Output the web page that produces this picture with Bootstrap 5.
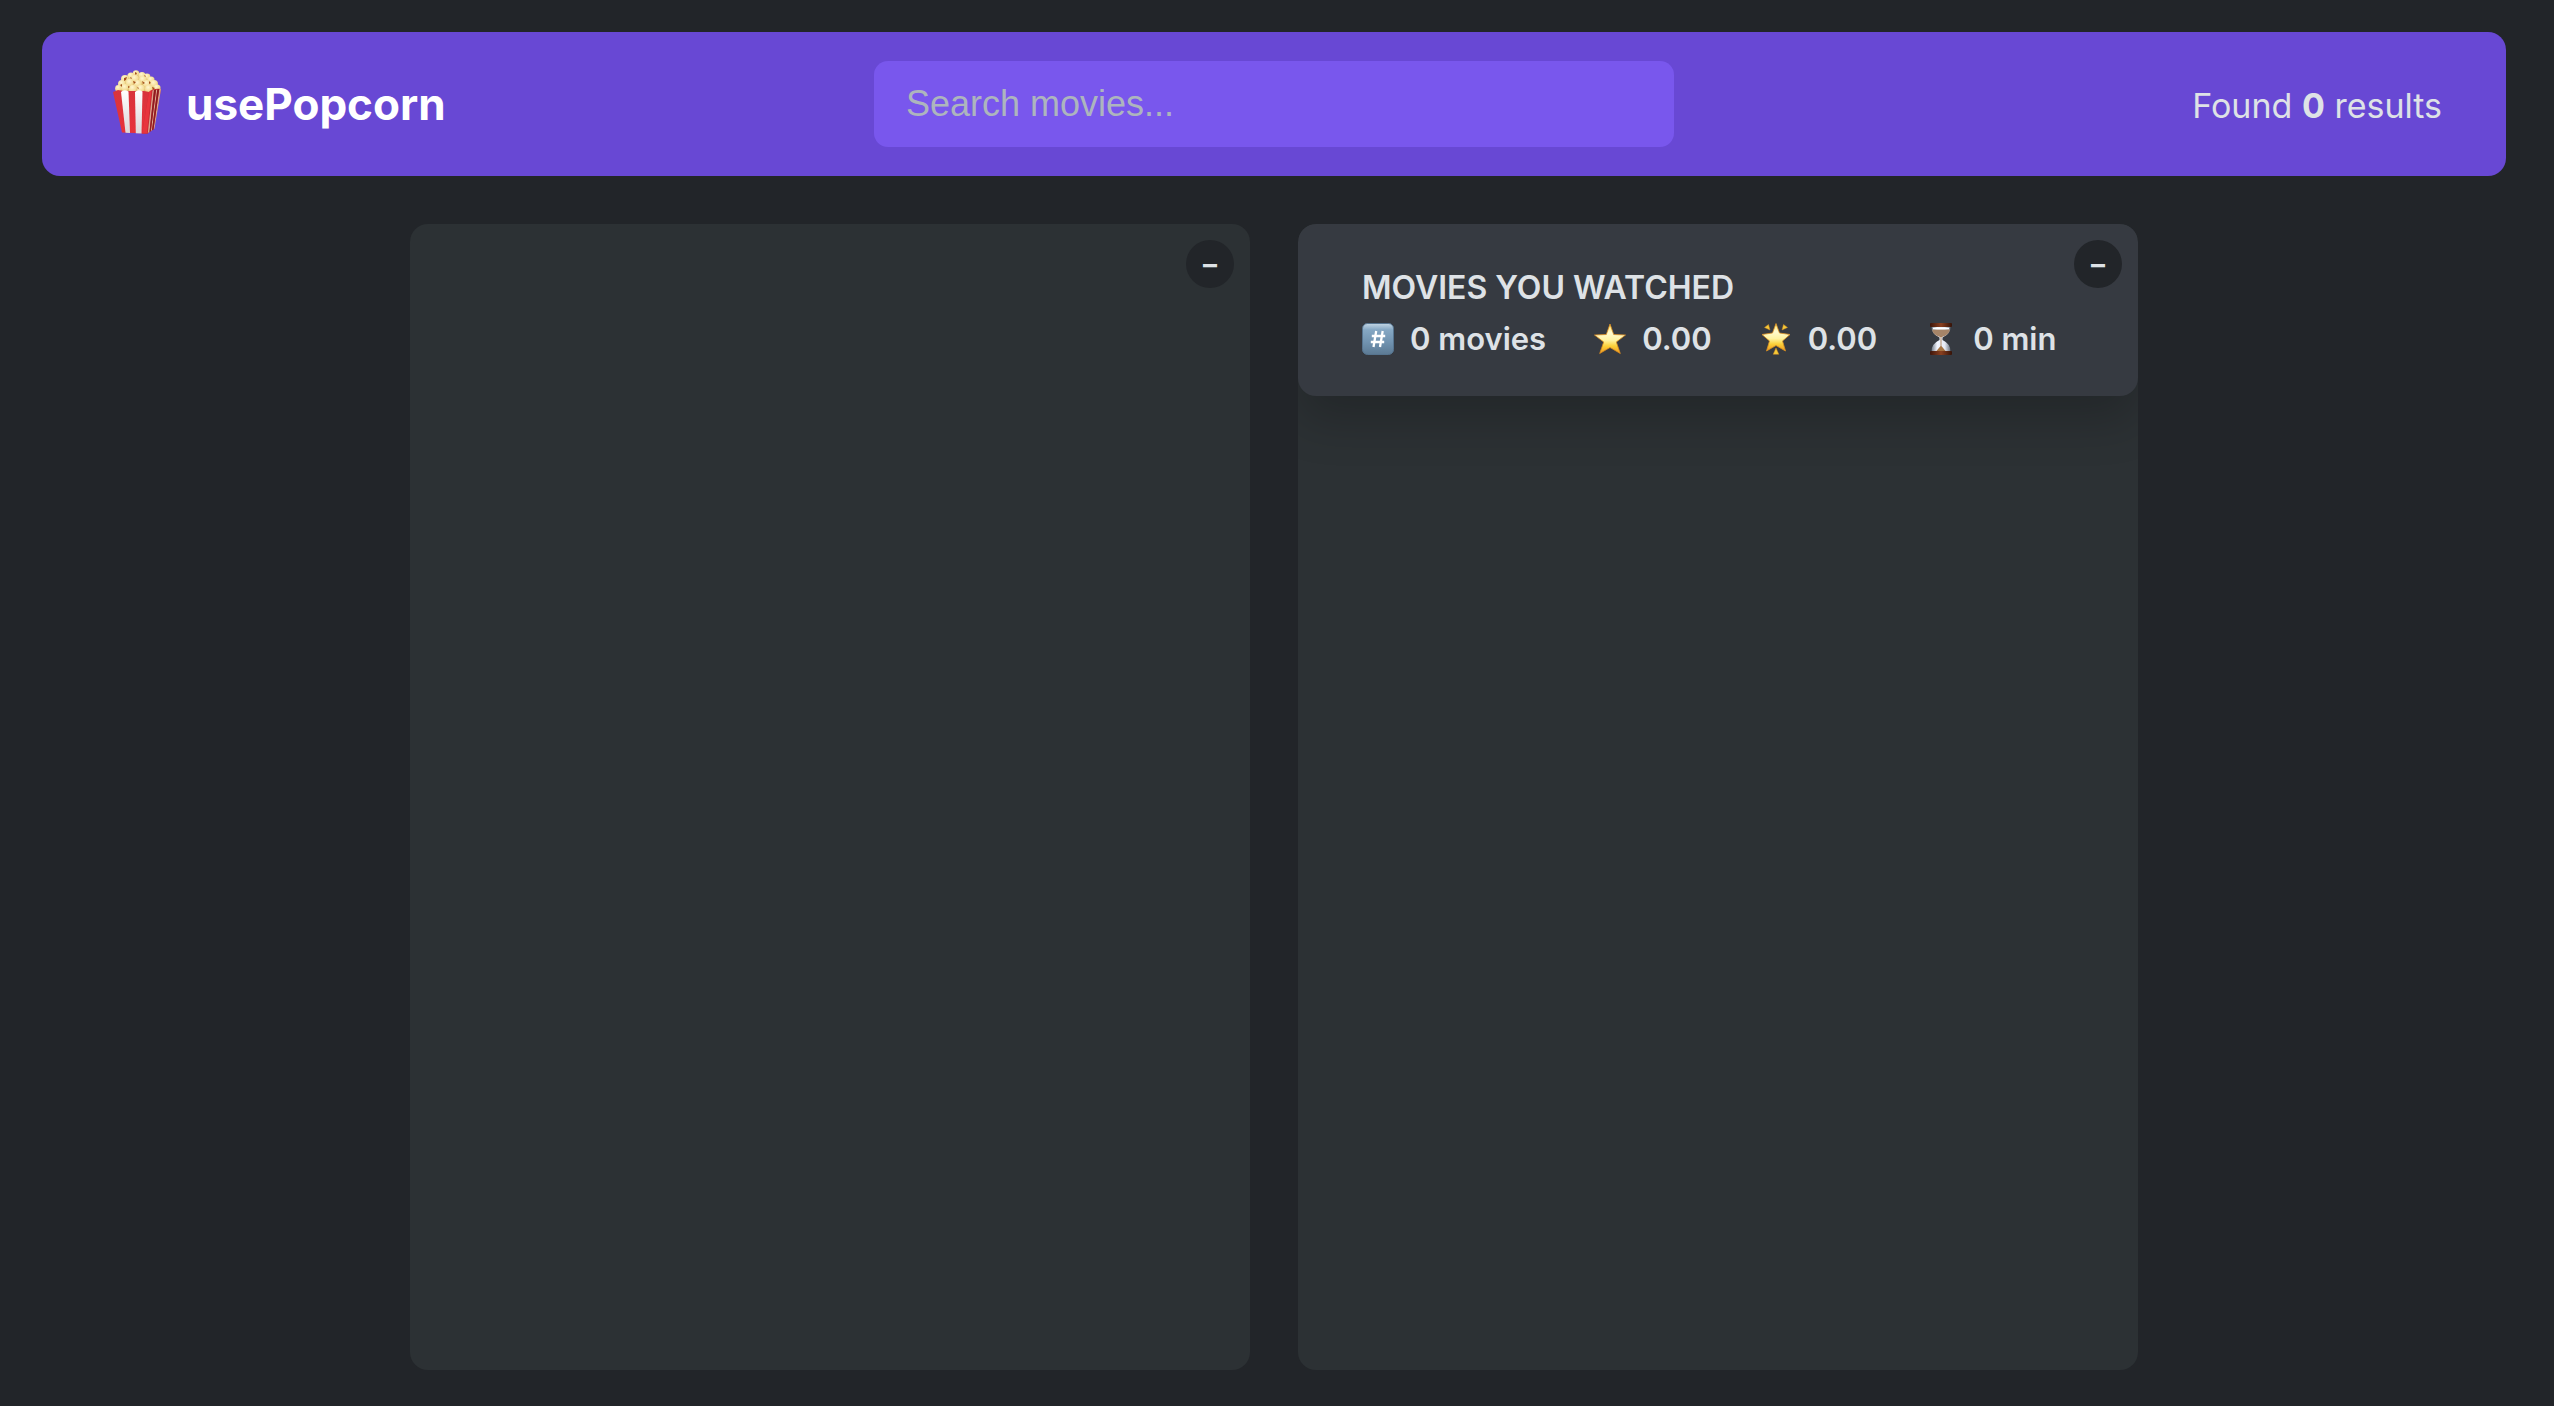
<!DOCTYPE html>
<html lang="en">
<head>
<meta charset="utf-8">
<meta name="viewport" content="width=device-width, initial-scale=1">
<title>usePopcorn</title>
<link href="https://cdn.jsdelivr.net/npm/bootstrap@5.3.0/dist/css/bootstrap.min.css" rel="stylesheet">
<style>
  body {
    background: #222529;
    color: #dee2e6;
    font-family: Inter, "Liberation Sans", sans-serif;
    padding: 32px 48px 36px 42px;
  }
  .top-bar {
    background: #6848d4;
    border-radius: 18px;
    padding: 29px 64px;
    margin-bottom: 48px;
  }
  .brand-name { color: #fff; font-size: 44px; font-weight: 700; line-height: 64px; }
  .search-field {
    max-width: 800px;
    height: 86px;
    padding: 0 32px;
    border: 0;
    border-radius: 14px;
    background: #7957ed;
    color: #dee2e6;
    font: 36px/44px "Liberation Sans", Arial, sans-serif;
  }
  .search-field:focus { background: #7957ed; color: #dee2e6; box-shadow: none; }
  .search-field::placeholder { color: #adb5bd; opacity: 1; }
  .result-count { font-size: 34px; line-height: 44px; }
  .panels { gap: 48px; }
  .panel { flex: 0 1 840px; background: #2c3134; border-radius: 18px; }
  .summary {
    background: #363a41;
    border-radius: 18px;
    padding: 44px 64px 37px;
    box-shadow: 0 24px 48px rgba(0, 0, 0, .2);
  }
  .summary h2 { font-size: 32px; font-weight: 600; line-height: 40px; margin-bottom: 11px; }
  .stats { gap: 48px; font-size: 31px; font-weight: 600; line-height: 40px; }
  .toggle {
    top: 16px;
    right: 16px;
    width: 48px;
    height: 48px;
    background: #222529;
    color: #dee2e6;
    font-size: 28px;
    font-weight: 700;
    line-height: 48px;
  }
</style>
<script src="https://cdn.jsdelivr.net/npm/bootstrap@5.3.0/dist/js/bootstrap.bundle.min.js"></script>
</head>
<body class="min-vh-100 d-flex flex-column">

<nav class="top-bar">
  <div class="row align-items-center gx-0">
    <div class="col d-flex align-items-center gap-3">
      <svg class="mb-1" width="64" height="64" viewBox="0 0 64 64" role="img" aria-label="Popcorn">
        <defs>
          <linearGradient id="red" x1="0" y1="0" x2="0" y2="1"><stop offset="0" stop-color="#d8343c"/><stop offset="1" stop-color="#e8323a"/></linearGradient>
          <linearGradient id="cream" x1="0" y1="0" x2="0" y2="1"><stop offset="0" stop-color="#fff"/><stop offset="1" stop-color="#dcd7d8"/></linearGradient>
          <radialGradient id="corn" cx=".4" cy=".3" r=".8"><stop offset="0" stop-color="#fff6cf"/><stop offset=".6" stop-color="#f3dc94"/><stop offset="1" stop-color="#cfa552"/></radialGradient>
        </defs>
        <path d="M10 22L13 14L21 7L30 2L42 5L49 12L54 19L44 23Z" fill="#dfbd6c"/>
        <g fill="url(#corn)">
          <circle cx="30" cy="3.500" r="3.200"/><circle cx="25" cy="6" r="3.600"/><circle cx="36" cy="5.500" r="3.600"/><circle cx="41" cy="7" r="3.400"/>
          <circle cx="19" cy="9" r="4"/><circle cx="29" cy="9" r="4.200"/><circle cx="37" cy="10" r="4"/><circle cx="45" cy="10" r="3.600"/>
          <circle cx="16" cy="14" r="4"/><circle cx="24" cy="13" r="4.200"/><circle cx="32" cy="14" r="4"/><circle cx="41" cy="14" r="4"/><circle cx="48" cy="14" r="4"/>
          <circle cx="12.500" cy="18.500" r="3.400"/><circle cx="19" cy="18" r="4"/><circle cx="27" cy="19" r="4.200"/><circle cx="35" cy="19" r="4.200"/><circle cx="43" cy="19" r="4"/><circle cx="51" cy="18" r="3.600"/>
        </g>
        <g fill="#a4501b">
          <path d="M29 2l2 1-1 2-1-1zM18 8l3-1-1 3-2 1zM38 5l2 1-1 1zM27 11l3 1-2 2zM36 11l3 2-2 1zM14 15l2-1v3zM22 16l2 1-2 1zM43 11l2 2-2 1zM46 17l3 1-2 2zM31 17l2 1-1 1zM25 7l1 2-2-1z"/>
        </g>
        <path d="M7 22L12 20L17 21L24 21L31 21L38 21L43 22L42 63.500L16 62.500Z" fill="url(#red)"/>
        <path d="M15 22Q18 19 22.500 21.500L24 63L19.500 62.800Z" fill="url(#cream)"/>
        <path d="M29 22Q32 19 36.500 21.500L35.500 63.500L29.800 63.300Z" fill="url(#cream)"/>
        <path d="M43 22Q47 18 55 19L48 59L41.500 63.500L36 63.500Z" fill="#c62931"/>
        <path d="M43 22L45.500 20.500L41 63.300L36 63.500Z" fill="#e8343c"/>
        <path d="M46.500 20.500L48 20L43.500 62L41.800 63ZM50 20L51.300 19.500L46 60.200L44.800 61ZM53.200 19.200L55 19L48.500 58.500L47.500 59.500Z" fill="#d9a58d"/>
        <path d="M48 20L50 20L44.800 61L43.500 62ZM51.300 19.500L53.200 19.200L47.500 59.500L46 60.200Z" fill="#8d1b20"/>
      </svg>
      <h1 class="brand-name mb-0">usePopcorn</h1>
    </div>
    <div class="col-auto">
      <input class="search-field form-control" type="text" size="60" placeholder="Search movies..." aria-label="Search movies">
    </div>
    <p class="col result-count text-end pt-1 mb-0">Found <strong>0</strong> results</p>
  </div>
</nav>

<main class="panels d-flex justify-content-center flex-grow-1">
  <section class="panel position-relative overflow-hidden" aria-label="Search results">
    <button class="toggle btn rounded-circle border-0 p-0 position-absolute" type="button" aria-label="Collapse results">–</button>
  </section>
  <section class="panel position-relative overflow-hidden" aria-label="Watched movies">
    <div class="summary">
      <h2 class="text-uppercase">Movies you watched</h2>
      <div class="stats d-flex">
        <div class="d-flex align-items-center gap-3">
          <svg width="32" height="32" viewBox="0 0 32 32" aria-hidden="true">
            <defs><linearGradient id="key" x1="0" y1="0" x2="0" y2="1"><stop offset="0" stop-color="#c3d6e4"/><stop offset=".2" stop-color="#86a8c4"/><stop offset=".6" stop-color="#7193b0"/><stop offset="1" stop-color="#5c7a94"/></linearGradient></defs>
            <rect x=".5" y=".5" width="31" height="31" rx="5" fill="url(#key)" stroke="#56748f"/>
            <path d="M14.200 8L11.500 24M20.700 8L18 24M9.800 13H23.200M8.800 19H22.200" stroke="#fff" stroke-width="2.300" fill="none"/>
          </svg>
          <span>0 movies</span>
        </div>
        <div class="d-flex align-items-center gap-3">
          <svg width="32" height="32" viewBox="0 0 32 32" aria-hidden="true">
            <defs><linearGradient id="gold" x1="0" y1="0" x2="0" y2="1"><stop offset="0" stop-color="#ffdf5a"/><stop offset=".3" stop-color="#fffbd0"/><stop offset=".55" stop-color="#fff3a0"/><stop offset=".75" stop-color="#fbd038"/><stop offset="1" stop-color="#ee9820"/></linearGradient></defs>
            <path d="M16 1L19.700 11.500L31.500 12L22.300 19L26.300 30.500L16 24.500L5.700 30.500L9.700 19L.5 12L12.300 11.500Z" fill="url(#gold)" stroke="#d98b20" stroke-width=".8" stroke-linejoin="round"/>
          </svg>
          <span>0.00</span>
        </div>
        <div class="d-flex align-items-center gap-3">
          <svg width="32" height="32" viewBox="0 0 32 32" aria-hidden="true">
            <path d="M16 .5L19.500 10L30 11.500L22.500 18L25.500 28L16 22.500L6.500 28L9.500 18L2 11.500L12.500 10Z" fill="url(#gold)" stroke="#dc9022" stroke-width=".8" stroke-linejoin="round"/>
            <path d="M8.500 1.500L10 7L4.500 4.500ZM23.500 1.500L22 7L27.500 4.500ZM16 25L18.800 31.300H13.200Z" fill="#f5ca38" stroke="#d28a22" stroke-width=".5"/>
          </svg>
          <span>0.00</span>
        </div>
        <div class="d-flex align-items-center gap-3">
          <svg width="32" height="32" viewBox="0 0 32 32" aria-hidden="true">
            <defs>
              <linearGradient id="wood" x1="0" x2="1"><stop offset="0" stop-color="#3c150a"/><stop offset=".5" stop-color="#8a4020"/><stop offset="1" stop-color="#351207"/></linearGradient>
              <linearGradient id="glass" x1="0" x2="1"><stop offset="0" stop-color="#6f7885"/><stop offset=".3" stop-color="#f2f5ff"/><stop offset=".7" stop-color="#e6eaf5"/><stop offset="1" stop-color="#68717e"/></linearGradient>
            </defs>
            <path d="M6.500 3H25.500Q26 11 17.500 14.500V17Q26 21 25.500 29H6.500Q6 21 14.500 17V14.500Q6 11 6.500 3Z" fill="url(#glass)"/>
            <path d="M7 6.500H25Q24 12 17 14H15Q8 12 7 6.500Z" fill="#a58468"/>
            <path d="M8 5.500H24" stroke="#fff" stroke-width="1.500"/>
            <path d="M15.600 13H16.400V23L21 28.500H11L15.600 23Z" fill="#a67443"/>
            <rect x="5" y="0" width="22" height="4" rx="1" fill="url(#wood)"/>
            <rect x="5" y="28" width="22" height="4" rx="1" fill="url(#wood)"/>
          </svg>
          <span>0 min</span>
        </div>
      </div>
    </div>
    <button class="toggle btn rounded-circle border-0 p-0 position-absolute" type="button" aria-label="Collapse watched list">–</button>
  </section>
</main>

</body>
</html>
